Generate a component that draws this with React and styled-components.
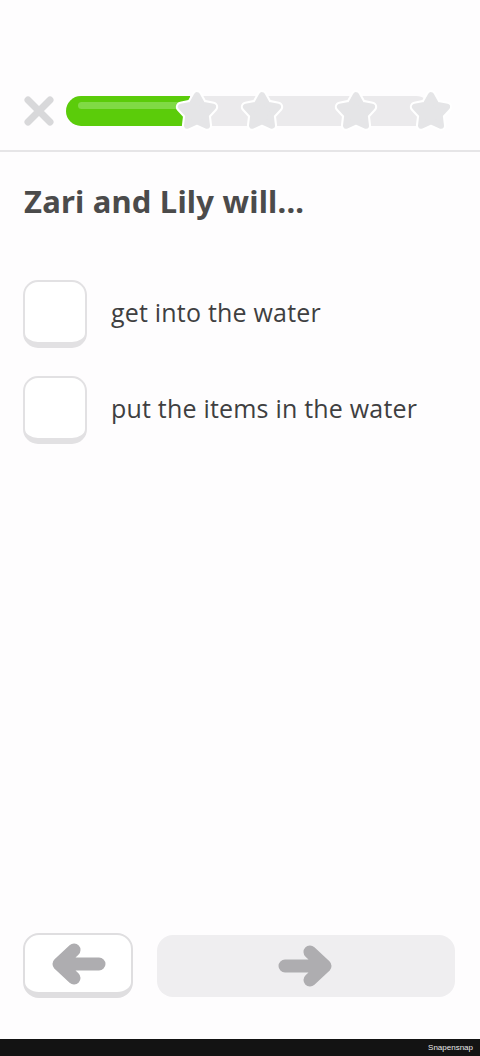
import React from "react";
import styled, { createGlobalStyle } from "styled-components";

const GlobalStyle = createGlobalStyle`
  html, body {
    margin: 0;
    padding: 0;
    background: #fefdfe;
  }
  * {
    box-sizing: border-box;
  }
`;

const options = ["get into the water", "put the items in the water"];
const stars = [35.9, 53.7, 79.5, 100];

const STAR_POINTS =
  "21,6 26.06,15.04 36.22,17.06 29.18,24.66 30.4,34.94 21,30.6 11.6,34.94 12.82,24.66 5.78,17.06 15.94,15.04";

const Star = ({ left }) => (
  <StarWrap style={{ left: `${left}%` }}>
    <svg width="44" height="44" viewBox="0 0 42 42">
      <polygon
        points={STAR_POINTS}
        fill="#fff"
        stroke="#fff"
        strokeWidth="10"
        strokeLinejoin="round"
      />
      <polygon
        points={STAR_POINTS}
        fill="#e5e5e7"
        stroke="#e5e5e7"
        strokeWidth="6"
        strokeLinejoin="round"
      />
    </svg>
  </StarWrap>
);

const Arrow = ({ flip }) => (
  <svg
    width="56"
    height="44"
    viewBox="0 0 56 44"
    style={flip ? { transform: "scaleX(-1)" } : undefined}
  >
    <path
      d="M7 22 H46 M32 8 L47 22 L32 36"
      fill="none"
      stroke="#aeadb0"
      strokeWidth="13"
      strokeLinecap="round"
      strokeLinejoin="round"
    />
  </svg>
);

const App = () => {
  return (
    <>
      <GlobalStyle />
      <Page>
        <Header>
          <CloseButton>
            <svg width="32" height="32" viewBox="0 0 32 32">
              <path
                d="M5 5 L27 27 M27 5 L5 27"
                stroke="#d8d8da"
                strokeWidth="7"
                strokeLinecap="round"
              />
            </svg>
          </CloseButton>
          <Track>
            <Fill style={{ width: "34%" }} />
            {stars.map((s) => (
              <Star key={s} left={s} />
            ))}
          </Track>
        </Header>
        <Divider />
        <Content>
          <Title>Zari and Lily will...</Title>
          <OptionList>
            {options.map((o) => (
              <Option key={o}>
                <Checkbox />
                <OptionText>{o}</OptionText>
              </Option>
            ))}
          </OptionList>
        </Content>
        <Footer>
          <BackButton>
            <Arrow flip />
          </BackButton>
          <NextButton>
            <Arrow />
          </NextButton>
        </Footer>
        <Watermark>Snapensnap</Watermark>
      </Page>
    </>
  );
};

export default App;

const Page = styled.div`
  height: 1056px;
  display: flex;
  flex-direction: column;
  background: #fefdfe;
  font-family: "Noto Sans", "Open Sans", sans-serif;
`;

const Header = styled.div`
  height: 150px;
  display: flex;
  align-items: center;
  gap: 11px;
  padding: 72px 49px 0 23px;
`;

const CloseButton = styled.div`
  width: 32px;
  height: 32px;
  display: flex;
  align-items: center;
  justify-content: center;
  flex-shrink: 0;
`;

const Track = styled.div`
  position: relative;
  flex: 1;
  height: 30px;
  border-radius: 15px;
  background: #ebeaec;
`;

const Fill = styled.div`
  position: absolute;
  left: 0;
  top: 0;
  bottom: 0;
  border-radius: 15px 0 0 15px;
  background: #5bcc0a;

  &::after {
    content: "";
    position: absolute;
    left: 12px;
    right: 4px;
    top: 6px;
    height: 7px;
    border-radius: 4px;
    background: #80da45;
  }
`;

const StarWrap = styled.div`
  position: absolute;
  top: 50%;
  width: 44px;
  height: 44px;
  transform: translate(-50%, -50%);
  display: flex;
`;

const Divider = styled.div`
  height: 2px;
  background: #e6e5e7;
`;

const Content = styled.div`
  flex: 1;
  padding: 28px 23px 0 23px;
`;

const Title = styled.h1`
  margin: 0 0 0 1px;
  font-family: "Noto Sans", sans-serif;
  font-weight: 700;
  font-size: 31px;
  line-height: 42px;
  color: #4b4b4b;
  letter-spacing: 0.2px;
`;

const OptionList = styled.div`
  margin-top: 58px;
  display: flex;
  flex-direction: column;
  gap: 28px;
`;

const Option = styled.div`
  display: flex;
  align-items: center;
  gap: 24px;
`;

const Checkbox = styled.div`
  width: 64px;
  height: 68px;
  flex-shrink: 0;
  border: 2px solid #e2e1e3;
  border-bottom-width: 6px;
  border-radius: 15px;
  background: #fff;
`;

const OptionText = styled.span`
  font-family: "Open Sans", sans-serif;
  font-size: 25px;
  color: #3f3f41;
  margin-top: -5px;
  letter-spacing: 0.2px;
`;

const Footer = styled.div`
  display: flex;
  align-items: flex-start;
  gap: 24px;
  padding: 0 25px 41px 23px;
`;

const BackButton = styled.div`
  width: 110px;
  height: 65px;
  border: 2px solid #dfdee0;
  border-bottom-width: 6px;
  border-radius: 16px;
  background: #fff;
  display: flex;
  align-items: center;
  justify-content: center;
`;

const NextButton = styled.div`
  flex: 1;
  height: 62px;
  margin-top: 2px;
  border-radius: 16px;
  background: #efeef0;
  display: flex;
  align-items: center;
  justify-content: center;
`;

const Watermark = styled.div`
  height: 17px;
  background: #131313;
  color: #e8e8e8;
  font-family: "Liberation Sans", sans-serif;
  font-size: 8px;
  display: flex;
  align-items: center;
  justify-content: flex-end;
  padding-right: 7px;
`;
